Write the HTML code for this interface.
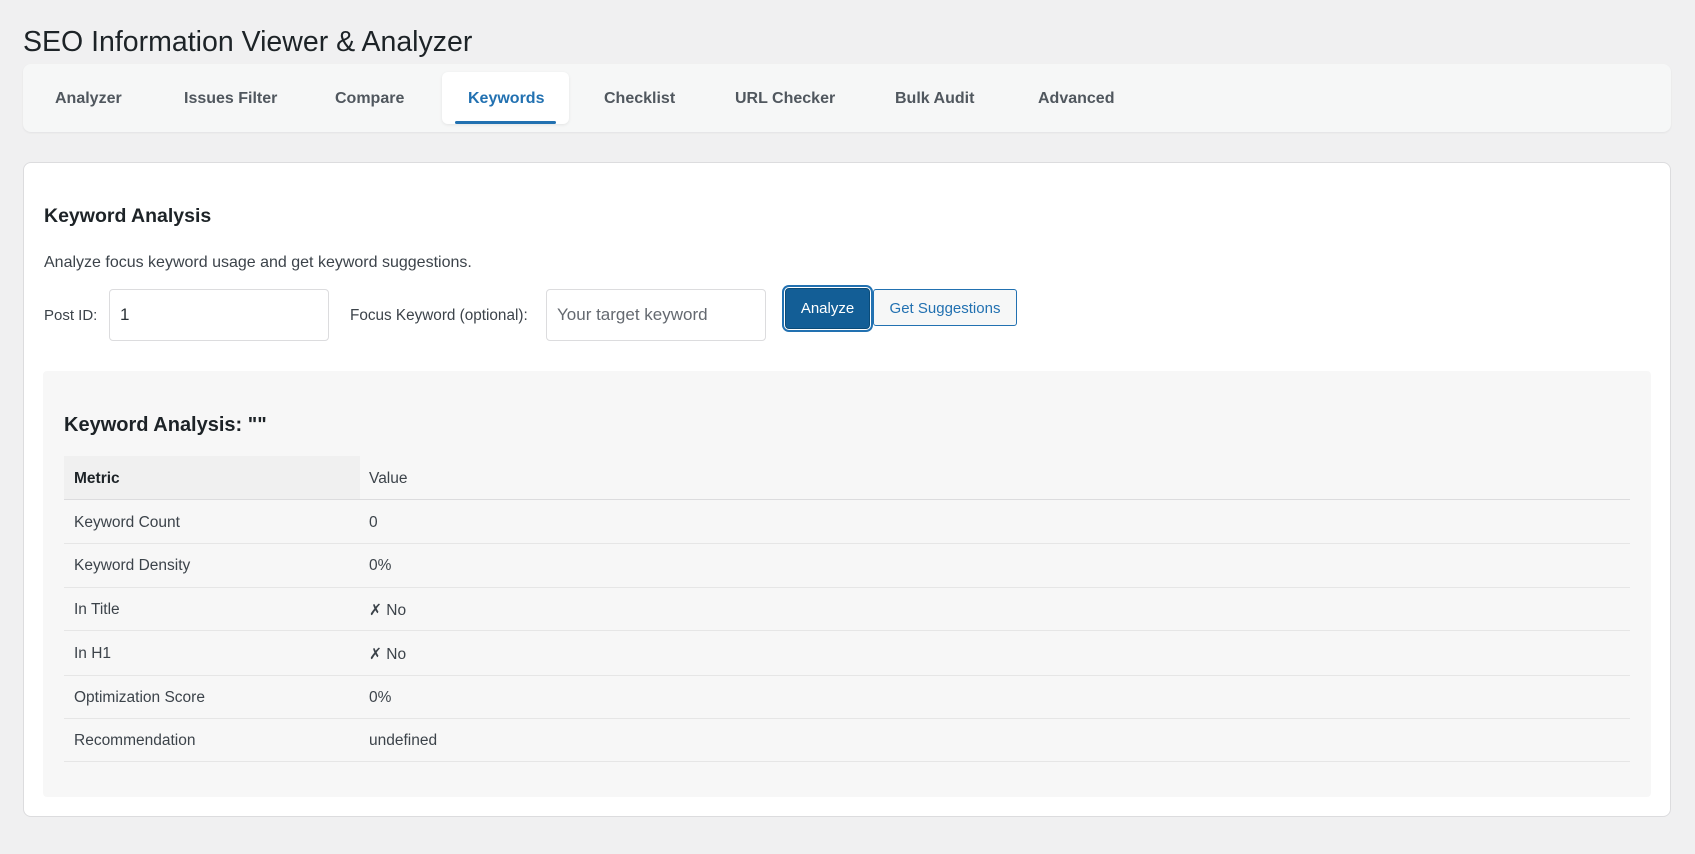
<!DOCTYPE html>
<html><head><meta charset="utf-8"><style>
*{box-sizing:border-box;margin:0;padding:0}
body{width:1695px;height:854px;background:#f0f0f1;font-family:"Liberation Sans",sans-serif;color:#3c434a;position:relative;overflow:hidden}
.a{position:absolute;white-space:nowrap}
h1{position:absolute;left:23px;top:26px;font-size:28.5px;font-weight:400;color:#1d2327}
.tabs{position:absolute;left:23px;top:64px;width:1648px;height:68px;background:#f6f7f7;border-radius:8px;box-shadow:0 1px 2px rgba(0,0,0,.06)}
.tab{position:absolute;top:90px;font-size:16px;font-weight:700;color:#50575e}
.act{position:absolute;left:442px;top:72px;width:127px;height:52px;background:#fff;border-radius:6px;box-shadow:0 1px 3px rgba(0,0,0,.08)}
.ul{position:absolute;left:455px;top:121px;width:101px;height:3px;background:#2271b1;border-radius:2px}
.card{position:absolute;left:23px;top:162px;width:1648px;height:655px;background:#fff;border:1px solid #dcdcde;border-radius:8px}
.inp{position:absolute;top:289px;height:52px;border:1px solid #dcdcde;border-radius:4px;background:#fff;font-size:17px;padding:15px 10px}
.res{position:absolute;left:43px;top:371px;width:1608px;height:426px;background:#f7f7f7;border-radius:4px}
.line{position:absolute;left:64px;width:1566px;height:1px;background:#e6e6e6}
.c{position:absolute;font-size:15.5px;color:#3c434a}
</style></head><body>
<h1>SEO Information Viewer &amp; Analyzer</h1>
<div class="tabs"></div>
<div class="act"></div><div class="ul"></div>
<div class="a tab" style="left:55px">Analyzer</div>
<div class="a tab" style="left:184px">Issues Filter</div>
<div class="a tab" style="left:335px">Compare</div>
<div class="a tab" style="left:468px;color:#2271b1">Keywords</div>
<div class="a tab" style="left:604px">Checklist</div>
<div class="a tab" style="left:735px">URL Checker</div>
<div class="a tab" style="left:895px">Bulk Audit</div>
<div class="a tab" style="left:1038px">Advanced</div>
<div class="card"></div>
<div class="a" style="left:44px;top:205px;font-size:19.5px;font-weight:700;color:#1d2327">Keyword Analysis</div>
<div class="a" style="left:44px;top:254px;font-size:16px">Analyze focus keyword usage and get keyword suggestions.</div>
<div class="a" style="left:44px;top:307px;font-size:15px">Post ID:</div>
<div class="inp" style="left:109px;width:220px;color:#2c3338">1</div>
<div class="a" style="left:350px;top:307px;font-size:15.3px">Focus Keyword (optional):</div>
<div class="inp" style="left:546px;width:220px;color:#646970">Your target keyword</div>
<div class="a" style="left:785px;top:288px;width:85px;height:41px;background:#135e96;border:1px solid #0a4b78;border-radius:4px;box-shadow:0 0 0 1px #fff,0 0 0 3px #2271b1;color:#fff;font-size:15px;text-align:center;line-height:39px">Analyze</div>
<div class="a" style="left:873px;top:289px;width:144px;height:37px;background:#f6f7f7;border:1px solid #2271b1;border-radius:3px;color:#2271b1;font-size:15px;text-align:center;line-height:37px">Get Suggestions</div>
<div class="res"></div>
<div class="a" style="left:64px;top:414px;font-size:20px;font-weight:700;color:#1d2327">Keyword Analysis: ""</div>
<div class="a" style="left:64px;top:456px;width:296px;height:43px;background:#f0f0f0"></div>
<div class="line" style="top:499px;background:#dcdcde"></div>
<div class="line" style="top:543px"></div>
<div class="line" style="top:587px"></div>
<div class="line" style="top:630px"></div>
<div class="line" style="top:675px"></div>
<div class="line" style="top:718px"></div>
<div class="line" style="top:761px"></div>
<div class="c" style="left:74px;top:470px;font-weight:700;color:#1d2327">Metric</div><div class="c" style="left:369px;top:470px">Value</div>
<div class="c" style="left:74px;top:514px">Keyword Count</div><div class="c" style="left:369px;top:514px">0</div>
<div class="c" style="left:74px;top:557px">Keyword Density</div><div class="c" style="left:369px;top:557px">0%</div>
<div class="c" style="left:74px;top:601px">In Title</div><div class="c" style="left:369px;top:601px">✗ No</div>
<div class="c" style="left:74px;top:645px">In H1</div><div class="c" style="left:369px;top:645px">✗ No</div>
<div class="c" style="left:74px;top:689px">Optimization Score</div><div class="c" style="left:369px;top:689px">0%</div>
<div class="c" style="left:74px;top:732px">Recommendation</div><div class="c" style="left:369px;top:732px">undefined</div>
</body></html>
